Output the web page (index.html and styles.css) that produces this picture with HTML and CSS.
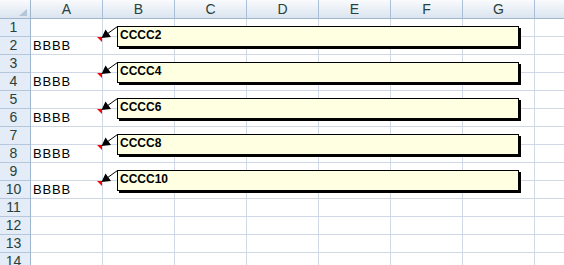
FILE: index.html
```html
<!DOCTYPE html>
<html lang="en">
<head>
  <meta charset="UTF-8">
  <title>Sheet1</title>
  <link rel="stylesheet" href="styles.css">
</head>
<body>

<div class="sheet">
  <!-- Column headers -->
  <div class="row head">
    <div class="corner"></div>
    <div class="col-h">A</div>
    <div class="col-h">B</div>
    <div class="col-h">C</div>
    <div class="col-h">D</div>
    <div class="col-h">E</div>
    <div class="col-h">F</div>
    <div class="col-h">G</div>
    <div class="col-h"></div>
  </div>

  <div class="row">
    <div class="row-h">1</div>
    <div class="cell"></div>
    <div class="cell anchor">
      <div class="note">
        <svg class="pointer" width="18" height="18" viewBox="0 0 18 18">
          <line x1="17.5" y1="1.5" x2="7" y2="9" stroke="#000" stroke-width="1"/>
          <polygon points="1.5,13 11,12 5.5,4.5" fill="#000"/>
        </svg>
        CCCC2
      </div>
    </div>
    <div class="cell"></div><div class="cell"></div><div class="cell"></div><div class="cell"></div><div class="cell"></div><div class="cell"></div>
  </div>
  <div class="row">
    <div class="row-h">2</div>
    <div class="cell flagged">BBBB</div>
    <div class="cell"></div><div class="cell"></div><div class="cell"></div><div class="cell"></div><div class="cell"></div><div class="cell"></div><div class="cell"></div>
  </div>

  <div class="row">
    <div class="row-h">3</div>
    <div class="cell"></div>
    <div class="cell anchor">
      <div class="note">
        <svg class="pointer" width="18" height="18" viewBox="0 0 18 18">
          <line x1="17.5" y1="1.5" x2="7" y2="9" stroke="#000" stroke-width="1"/>
          <polygon points="1.5,13 11,12 5.5,4.5" fill="#000"/>
        </svg>
        CCCC4
      </div>
    </div>
    <div class="cell"></div><div class="cell"></div><div class="cell"></div><div class="cell"></div><div class="cell"></div><div class="cell"></div>
  </div>
  <div class="row">
    <div class="row-h">4</div>
    <div class="cell flagged">BBBB</div>
    <div class="cell"></div><div class="cell"></div><div class="cell"></div><div class="cell"></div><div class="cell"></div><div class="cell"></div><div class="cell"></div>
  </div>

  <div class="row">
    <div class="row-h">5</div>
    <div class="cell"></div>
    <div class="cell anchor">
      <div class="note">
        <svg class="pointer" width="18" height="18" viewBox="0 0 18 18">
          <line x1="17.5" y1="1.5" x2="7" y2="9" stroke="#000" stroke-width="1"/>
          <polygon points="1.5,13 11,12 5.5,4.5" fill="#000"/>
        </svg>
        CCCC6
      </div>
    </div>
    <div class="cell"></div><div class="cell"></div><div class="cell"></div><div class="cell"></div><div class="cell"></div><div class="cell"></div>
  </div>
  <div class="row">
    <div class="row-h">6</div>
    <div class="cell flagged">BBBB</div>
    <div class="cell"></div><div class="cell"></div><div class="cell"></div><div class="cell"></div><div class="cell"></div><div class="cell"></div><div class="cell"></div>
  </div>

  <div class="row">
    <div class="row-h">7</div>
    <div class="cell"></div>
    <div class="cell anchor">
      <div class="note">
        <svg class="pointer" width="18" height="18" viewBox="0 0 18 18">
          <line x1="17.5" y1="1.5" x2="7" y2="9" stroke="#000" stroke-width="1"/>
          <polygon points="1.5,13 11,12 5.5,4.5" fill="#000"/>
        </svg>
        CCCC8
      </div>
    </div>
    <div class="cell"></div><div class="cell"></div><div class="cell"></div><div class="cell"></div><div class="cell"></div><div class="cell"></div>
  </div>
  <div class="row">
    <div class="row-h">8</div>
    <div class="cell flagged">BBBB</div>
    <div class="cell"></div><div class="cell"></div><div class="cell"></div><div class="cell"></div><div class="cell"></div><div class="cell"></div><div class="cell"></div>
  </div>

  <div class="row">
    <div class="row-h">9</div>
    <div class="cell"></div>
    <div class="cell anchor">
      <div class="note">
        <svg class="pointer" width="18" height="18" viewBox="0 0 18 18">
          <line x1="17.5" y1="1.5" x2="7" y2="9" stroke="#000" stroke-width="1"/>
          <polygon points="1.5,13 11,12 5.5,4.5" fill="#000"/>
        </svg>
        CCCC10
      </div>
    </div>
    <div class="cell"></div><div class="cell"></div><div class="cell"></div><div class="cell"></div><div class="cell"></div><div class="cell"></div>
  </div>
  <div class="row">
    <div class="row-h">10</div>
    <div class="cell flagged">BBBB</div>
    <div class="cell"></div><div class="cell"></div><div class="cell"></div><div class="cell"></div><div class="cell"></div><div class="cell"></div><div class="cell"></div>
  </div>

  <div class="row">
    <div class="row-h">11</div>
    <div class="cell"></div><div class="cell"></div><div class="cell"></div><div class="cell"></div><div class="cell"></div><div class="cell"></div><div class="cell"></div><div class="cell"></div>
  </div>
  <div class="row">
    <div class="row-h">12</div>
    <div class="cell"></div><div class="cell"></div><div class="cell"></div><div class="cell"></div><div class="cell"></div><div class="cell"></div><div class="cell"></div><div class="cell"></div>
  </div>
  <div class="row">
    <div class="row-h">13</div>
    <div class="cell"></div><div class="cell"></div><div class="cell"></div><div class="cell"></div><div class="cell"></div><div class="cell"></div><div class="cell"></div><div class="cell"></div>
  </div>
  <div class="row">
    <div class="row-h">14</div>
    <div class="cell"></div><div class="cell"></div><div class="cell"></div><div class="cell"></div><div class="cell"></div><div class="cell"></div><div class="cell"></div><div class="cell"></div>
  </div>
</div>

</body>
</html>
```

FILE: styles.css
```css
/* Reset */
* {
  margin: 0;
  padding: 0;
  box-sizing: border-box;
}
html, body {
  width: 564px;
  height: 265px;
  overflow: hidden;
  background-color: #fff;
}
body {
  font-family: "Liberation Sans", Arial, sans-serif;
  color: #000;
}
.sheet {
  width: 564px;
}
.row {
  display: flex;
  height: 18px;
}
.row.head {
  height: 19px;
}
.corner {
  flex: none;
  width: 31px;
  position: relative;
  border-right: 1px solid #9eb6ce;
  border-bottom: 1px solid #9eb6ce;
  background: linear-gradient(#f9fbfd, #dbe4ef);
}
.corner::after {
  content: "";
  position: absolute;
  right: 3px;
  bottom: 2px;
  border-left: 8px solid transparent;
  border-bottom: 7px solid #b5c5d8;
}
.col-h {
  flex: none;
  width: 72px;
  border-right: 1px solid #aac0d7;
  border-bottom: 1px solid #9eb6ce;
  background: linear-gradient(#f9fbfd, #dbe4ef);
  color: #27413e;
  font-size: 14px;
  line-height: 19px;
  text-align: center;
}
.row-h {
  flex: none;
  width: 31px;
  padding-right: 3px;
  border-right: 1px solid #9eb6ce;
  border-bottom: 1px solid #b5c6dc;
  background-color: #e4ecf7;
  color: #27413e;
  font-size: 14px;
  line-height: 17px;
  text-align: center;
}
.cell {
  flex: none;
  width: 72px;
  padding-left: 2px;
  border-right: 1px solid #d0d7e5;
  border-bottom: 1px solid #d0d7e5;
  font-size: 13px;
  letter-spacing: 0.8px;
  line-height: 17px;
  white-space: nowrap;
}
.anchor, .flagged {
  position: relative;
}
/* red comment marker in the cell corner */
.flagged::after {
  content: "";
  position: absolute;
  top: 0;
  right: 0;
  border-left: 5px solid transparent;
  border-top: 5px solid #f00;
}
.note {
  position: absolute;
  left: 14px;
  top: 7px;
  z-index: 1;
  width: 402px;
  height: 21px;
  padding: 1px 0 0 2px;
  border: 1px solid #000;
  background-color: #ffffe1;
  box-shadow: 2px 2px 0 #000;
  font-size: 12px;
  font-weight: bold;
  letter-spacing: 0;
  line-height: 14px;
  white-space: nowrap;
}
.pointer {
  position: absolute;
  left: -18px;
  top: -2px;
  overflow: visible;
}
```
